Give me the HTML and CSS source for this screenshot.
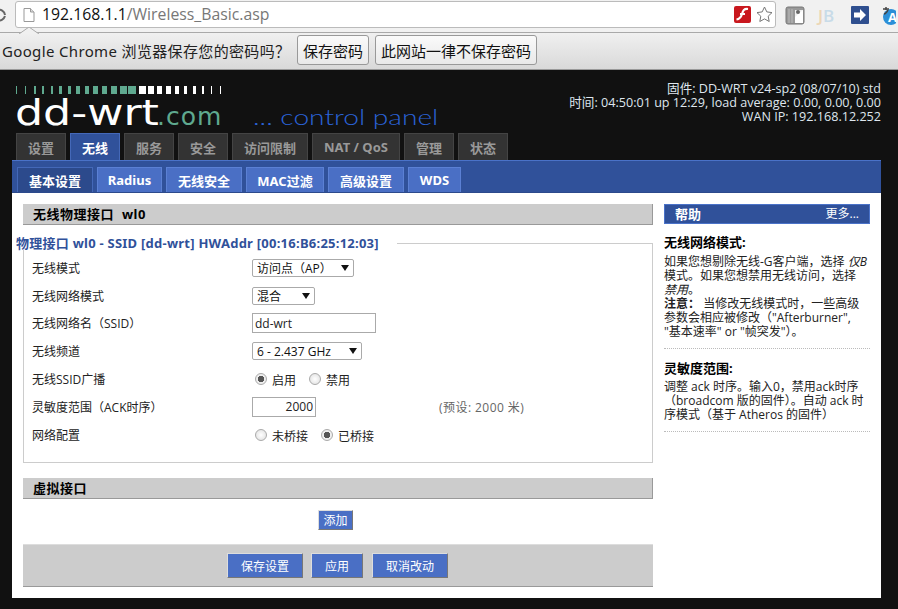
FILE: index.html
```html
<!DOCTYPE html>
<html lang="zh-CN">
<head>
  <meta charset="UTF-8">
  <title>DD-WRT (build 14929) - 无线设置</title>
  <link rel="stylesheet" href="styles.css">
</head>
<body>
  <div class="toolbar">
    <svg class="reload" width="6" height="16" viewBox="0 0 6 16"><path d="M-3 3a6 6 0 0 1 8 5M-3 13a6 6 0 0 0 8-4" fill="none" stroke="#666" stroke-width="2"/></svg>
    <div class="omnibox">
      <svg class="page-icon" width="12" height="14" viewBox="0 0 12 14"><path d="M1 .5h6.500l3.500 3.500v9.500h-10z" fill="#fff" stroke="#999"/><path d="M7.500 .5v3.500h3.500" fill="#ddd" stroke="#999"/></svg>
      <span class="url"><b>192.168.1.1</b>/Wireless_Basic.asp</span>
      <svg class="flash" width="17" height="17" viewBox="0 0 17 17"><rect width="17" height="17" rx="2" fill="#c9181e"/><path d="M14 3c-4-.5-5 1.500-6 5s-2 5-5.500 5.500" fill="none" stroke="#fff" stroke-width="2.200"/><path d="M6 7h5v2H6z" fill="#fff"/></svg>
      <svg class="star" width="17" height="17" viewBox="0 0 17 17"><path d="M8.500 1l2.300 4.900 5.200.7-3.800 3.600 1 5.300-4.700-2.600-4.700 2.600 1-5.300L1 6.600l5.200-.7z" fill="#fff" stroke="#777"/></svg>
    </div>
    <div class="ext-icons">
      <svg width="20" height="19" viewBox="0 0 20 19"><rect x="1" y="1" width="18" height="17" rx="2" fill="#999" stroke="#777"/><path d="M10 4h8v13h-8z" fill="#eee"/><path d="M10 11l8-7v13h-8z" fill="#fff"/><circle cx="13" cy="6" r="2" fill="#666"/><path d="M4 3v14M7 3v14" stroke="#bbb"/></svg>
      <span class="ext-jb"><i>J</i>B</span>
      <svg width="18" height="18" viewBox="0 0 18 18"><rect width="18" height="18" rx="1" fill="#2f4f8f"/><path d="M3 6.500h6V3l6 6-6 6v-3.500H3z" fill="#fff"/></svg>
      <svg width="14" height="19" viewBox="0 0 14 19"><circle cx="9" cy="11" r="8" fill="#2b8fd8"/><path d="M1 3h6M4 1v3M2 8c2 0 3-2 4-4" fill="none" stroke="#444" stroke-width="1.500"/><text x="6" y="16" class="ext-a">A</text></svg>
    </div>
  </div>
  <div class="infobar">
    <svg class="bubble-tip" width="20" height="7" viewBox="0 0 20 7"><path d="M0 7l10-7 10 7" fill="#f0f0f0" stroke="#aaa"/></svg>
    <span class="infobar-text">Google Chrome 浏览器保存您的密码吗？</span>
    <button class="bar-btn">保存密码</button>
    <button class="bar-btn">此网站一律不保存密码</button>
  </div>

  <div class="page">
    <div class="masthead">
      <div class="logo">
        <svg class="logo-bars" width="210" height="9" viewBox="0 0 210 9">
          <g fill="#5fa98f">
            <rect x="1" width="1" height="8"/><rect x="10" width="1" height="8"/><rect x="19" width="2" height="8"/>
            <rect x="27" width="2" height="8"/><rect x="36" width="2" height="8"/><rect x="44" width="3" height="8"/>
            <rect x="53" width="3" height="8"/><rect x="61" width="4" height="8"/><rect x="70" width="4" height="8"/>
            <rect x="78" width="5" height="8"/><rect x="87" width="5" height="8"/><rect x="96" width="6" height="8"/>
            <rect x="105" width="7" height="8"/><rect x="113" width="8" height="8"/>
          </g>
          <g fill="#fff">
            <rect x="124" width="7" height="8"/><rect x="133" width="6" height="8"/><rect x="142" width="5" height="8"/>
            <rect x="151" width="5" height="8"/><rect x="160" width="4" height="8"/><rect x="169" width="3" height="8"/>
            <rect x="178" width="3" height="8"/><rect x="187" width="2" height="8"/><rect x="196" width="1" height="8"/><rect x="205" width="1" height="8"/>
          </g>
        </svg>
        <div class="logo-text"><span class="logo-name">dd-wrt</span><span class="logo-com">.com</span><span class="logo-panel">... control panel</span></div>
      </div>
      <div class="sysinfo">
        <div>固件: DD-WRT v24-sp2 (08/07/10) std</div>
        <div>时间: 04:50:01 up 12:29, load average: 0.00, 0.00, 0.00</div>
        <div>WAN IP: 192.168.12.252</div>
      </div>
    </div>

    <div class="main-tabs">
      <a class="tab w50">设置</a>
      <a class="tab w50 active">无线</a>
      <a class="tab w50">服务</a>
      <a class="tab w50">安全</a>
      <a class="tab w76">访问限制</a>
      <a class="tab w88">NAT / QoS</a>
      <a class="tab w50">管理</a>
      <a class="tab w50">状态</a>
    </div>
    <div class="sub-tabs">
      <a class="sub w76 active">基本设置</a>
      <a class="sub w65">Radius</a>
      <a class="sub w76">无线安全</a>
      <a class="sub w78">MAC过滤</a>
      <a class="sub w76">高级设置</a>
      <a class="sub w53">WDS</a>
    </div>

    <div class="content">
      <div class="col-main">
        <h2 class="section-head">无线物理接口 wl0</h2>
        <fieldset class="panel">
          <legend>物理接口 wl0 - SSID [dd-wrt] HWAddr [00:16:B6:25:12:03]</legend>
          <div class="row"><label>无线模式</label><span class="sel w102"><select><option>访问点（AP）</option></select></span></div>
          <div class="row"><label>无线网络模式</label><span class="sel w63"><select><option>混合</option></select></span></div>
          <div class="row"><label>无线网络名（SSID）</label><input class="text w124" type="text" value="dd-wrt"></div>
          <div class="row"><label>无线频道</label><span class="sel w110"><select><option>6 - 2.437 GHz</option></select></span></div>
          <div class="row"><label>无线SSID广播</label><span class="radios"><input type="radio" name="ssid" checked><span>启用</span><input type="radio" name="ssid"><span>禁用</span></span></div>
          <div class="row"><label>灵敏度范围（ACK时序）</label><input class="text w64 num" type="text" value="2000"><span class="note">(预设: 2000 米)</span></div>
          <div class="row"><label>网络配置</label><span class="radios"><input type="radio" name="br"><span>未桥接</span><input type="radio" name="br" checked><span>已桥接</span></span></div>
        </fieldset>
        <h2 class="section-head second">虚拟接口</h2>
        <div class="add-row"><button class="btn add">添加</button></div>
        <div class="submit-bar">
          <button class="btn save">保存设置</button>
          <button class="btn apply">应用</button>
          <button class="btn cancel">取消改动</button>
        </div>
      </div>

      <div class="col-help">
        <div class="help-head"><b>帮助</b><span>更多...</span></div>
        <div class="help-block first">
          <h3>无线网络模式:</h3>
          <p>如果您想剔除无线-G客户端，选择 <em>仅B</em> 模式。如果您想禁用无线访问，选择 <em>禁用</em>。<br><b>注意：</b> 当修改无线模式时，一些高级参数会相应被修改（"Afterburner", "基本速率" or "帧突发"）。</p>
        </div>
        <div class="help-block">
          <h3>灵敏度范围:</h3>
          <p>调整 ack 时序。输入0，禁用ack时序（broadcom 版的固件）。自动 ack 时序模式（基于 Atheros 的固件）</p>
        </div>
      </div>
    </div>
  </div>
</body>
</html>
```

FILE: styles.css
```css
* {
  box-sizing: border-box;
}
html, body {
  margin: 0;
  height: 609px;
  overflow: hidden;
}
body {
  font-family: "Open Sans", "Noto Sans CJK SC", sans-serif;
  font-size: 12px;
  color: #111;
  background: #111;
}

/* browser chrome */
.toolbar {
  height: 33px;
  display: flex;
  align-items: flex-start;
  background: #f1f1f1;
  border-bottom: 1px solid #a9a9a9;
  padding-top: 1px;
}
.reload {
  margin: 6px 9px 0 0;
}
.omnibox {
  flex: 0 0 761px;
  height: 27px;
  display: flex;
  align-items: center;
  background: #fff;
  border: 1px solid #bbb;
  border-radius: 3px;
  padding: 0 2px 0 7px;
}
.url {
  flex: 1;
  margin: -2px 0 0 7px;
  font-family: "Open Sans", sans-serif;
  font-size: 15.8px;
  color: #777;
  white-space: nowrap;
}
.url b {
  font-weight: 400;
  color: #111;
}
.flash {
  margin-right: 5px;
}
.ext-icons {
  display: flex;
  align-items: center;
  gap: 13px;
  margin: 3px 0 0 9px;
  height: 22px;
}
.ext-jb {
  font-family: "Open Sans", sans-serif;
  font-size: 17px;
  font-weight: 600;
  color: #c8dbe8;
  width: 20px;
}
.ext-jb i {
  font-style: normal;
  color: #ecd6b5;
}
.ext-a {
  font-family: "Open Sans", sans-serif;
  font-size: 13px;
  font-weight: 700;
  fill: #fff;
}
.infobar {
  position: relative;
  height: 37px;
  display: flex;
  align-items: center;
  gap: 6px;
  padding: 0 0 2px 2px;
  background: linear-gradient(#f0f0f0, #d9d9d9);
  border-bottom: 1px solid #999;
}
.bubble-tip {
  position: absolute;
  left: 19px;
  top: -6px;
}
.infobar-text {
  font-family: "Noto Sans", "Noto Sans CJK SC", sans-serif;
  font-size: 15px;
  letter-spacing: 0.35px;
  width: 289px;
  white-space: nowrap;
  color: #222;
}
.bar-btn {
  height: 30px;
  padding: 0 5px;
  font-family: "Noto Sans CJK SC", sans-serif;
  font-size: 15px;
  color: #111;
  background: linear-gradient(#fafafa, #e9e9e9);
  border: 1px solid #999;
  border-radius: 3px;
}

/* router page */
.page {
  height: 539px;
  background: #111;
}
.masthead {
  height: 63px;
  display: flex;
  justify-content: space-between;
  padding: 12px 17px 0 15px;
}
.logo-bars {
  display: block;
  margin-top: 4px;
}
.logo-text {
  display: flex;
  align-items: baseline;
  height: 34px;
  margin-top: 1px;
  white-space: nowrap;
}
.logo-name {
  display: block;
  width: 142px;
  font-family: "DejaVu Sans", sans-serif;
  font-size: 36px;
  line-height: 34px;
  color: #fff;
  transform: scaleX(1.23);
  transform-origin: left;
}
.logo-com {
  width: 96px;
  font-family: "DejaVu Sans", sans-serif;
  font-size: 25px;
  letter-spacing: 1px;
  color: #5fa98f;
}
.logo-panel {
  display: block;
  font-family: "Lato", sans-serif;
  font-weight: 300;
  font-size: 22px;
  color: #2a62d6;
  transform: scaleX(1.28);
  transform-origin: left;
}
.sysinfo {
  text-align: right;
  color: #dfe6ee;
  font-size: 12.6px;
  line-height: 14px;
}
.main-tabs {
  display: flex;
  gap: 4px;
  height: 27px;
  padding-left: 16px;
}
.tab {
  display: flex;
  align-items: center;
  justify-content: center;
  background: #333;
  border: 1px solid #444;
  border-bottom: 0;
  color: #999;
  font-family: "Noto Sans", "Noto Sans CJK SC", sans-serif;
  font-weight: 700;
  font-size: 13px;
}
.tab.active {
  background: #30519a;
  border-color: #4468b8;
  color: #fff;
}
.w50 { width: 50px; }
.w53 { width: 53px; }
.w65 { width: 65px; }
.w76 { width: 76px; }
.w78 { width: 78px; }
.w88 { width: 88px; }
.sub-tabs {
  display: flex;
  gap: 4px;
  height: 33px;
  width: 869px;
  margin-left: 12px;
  padding: 6px 0 0 5px;
  background: #30519a;
  border-top: 1px solid #4a72c8;
  border-bottom: 1px solid #2c4a8c;
}
.sub {
  display: flex;
  align-items: center;
  justify-content: center;
  height: 25px;
  background: #4a6fc5;
  border: 1px solid #5b80d4;
  border-bottom: 0;
  color: #fff;
  font-family: "Noto Sans", "Noto Sans CJK SC", sans-serif;
  font-weight: 700;
  font-size: 13px;
}
.sub.active {
  background: #2c4a8c;
  border-color: #4468b8;
}
.content {
  display: flex;
  width: 869px;
  height: 405px;
  margin-left: 12px;
  padding: 11px 0 0 11px;
  background: #fff;
}
.col-main {
  width: 630px;
}
.section-head {
  margin: 0;
  height: 21px;
  padding: 1px 0 0 10px;
  background: #ccc;
  border-bottom: 1px solid #999;
  border-right: 1px solid #999;
  font-family: "Noto Sans", "Noto Sans CJK SC", sans-serif;
  font-size: 13px;
  line-height: 18px;
  font-weight: 700;
  letter-spacing: 0.5px;
  word-spacing: 4px;
  color: #000;
}
.section-head.second {
  margin-top: 15px;
}
.panel {
  margin: 11px 0 0;
  padding: 4px 0 0 8px;
  height: 227px;
  border: 1px solid #ccc;
  min-width: 0;
}
.panel legend {
  margin-left: -16px;
  padding: 0 18px 0 0;
  font-family: "Noto Sans", "Noto Sans CJK SC", sans-serif;
  font-weight: 700;
  letter-spacing: 0.25px;
  color: #30519a;
  font-size: 13px;
  line-height: 14px;
}
.row {
  display: flex;
  align-items: center;
  height: 27.8px;
}
.row label {
  width: 220px;
  color: #222;
}
.sel {
  position: relative;
  display: block;
  height: 18px;
}
.sel::after {
  content: "";
  position: absolute;
  right: 5px;
  top: 6px;
  border: 4px solid transparent;
  border-top: 6px solid #111;
  border-bottom: 0;
}
.sel select {
  appearance: none;
  width: 100%;
  height: 100%;
  padding: 0 0 0 4px;
  font: inherit;
  color: #111;
  background: #fff;
  border: 1px solid #aaa;
  border-radius: 2px;
}
.w102 { width: 102px; }
.w63 { width: 63px; }
.w110 { width: 110px; }
.text {
  height: 20px;
  padding: 0 2px;
  font: inherit;
  color: #222;
  border: 1px solid #aaa;
  outline: 0;
}
.w124 { width: 124px; }
.w64 { width: 64px; }
.num {
  text-align: right;
}
.note {
  margin-left: 123px;
  letter-spacing: 0.45px;
  color: #666;
}
.radios {
  display: flex;
  align-items: center;
}
.radios span {
  margin: 2px 0 0 5px;
  color: #222;
}
.radios input {
  appearance: none;
  width: 12px;
  height: 12px;
  margin: 0 0 0 3px;
  border-radius: 50%;
  border: 1px solid #aaa;
  background: radial-gradient(#fff, #ddd);
}
.radios input:checked {
  background: radial-gradient(#555 0 3px, #eee 3.500px);
}
.radios span + input {
  margin-left: 13px;
}
.add-row {
  display: flex;
  justify-content: center;
  padding: 11px 5px 0 0;
  height: 45px;
}
.btn {
  font: inherit;
  color: #fff;
  background: #4a6fc5;
  border: 1px solid;
  border-color: #ddd #777 #777 #ddd;
  padding: 0;
}
.add {
  width: 35px;
  height: 20px;
}
.submit-bar {
  display: flex;
  align-items: flex-start;
  height: 43px;
  padding: 8px 0 0 204px;
  background: #ccc;
  border-top: 1px solid #ddd;
  border-bottom: 1px solid #999;
}
.submit-bar .btn {
  height: 25px;
}
.save { width: 76px; }
.apply { width: 52px; margin-left: 8px; }
.cancel { width: 76px; margin-left: 9px; }
.col-help {
  width: 206px;
  margin-left: 11px;
  line-height: 14px;
}
.help-head {
  display: flex;
  justify-content: space-between;
  height: 20px;
  padding: 1px 10px 0 10px;
  background: #30519a;
  border: 1px solid #4a72c8;
  color: #fff;
  line-height: 16px;
}
.help-head b {
  font-size: 13px;
}
.help-block {
  border-bottom: 1px dotted #bbb;
  padding-bottom: 9px;
}
.help-block.first {
  margin-top: 10px;
}
.help-block + .help-block {
  margin-top: 11px;
}
.help-block h3 {
  margin: 0 0 4px;
  font-family: "Noto Sans", "Noto Sans CJK SC", sans-serif;
  font-size: 13px;
  line-height: 16px;
  color: #000;
}
.help-block.first h3 {
  margin-bottom: 5px;
}
.help-block p {
  margin: 0;
  color: #222;
}
```
